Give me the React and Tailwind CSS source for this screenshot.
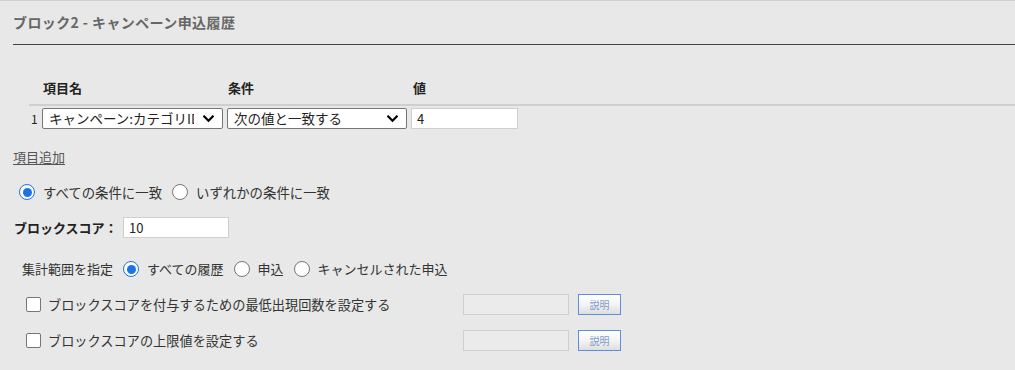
import React from "react";

const font = { fontFamily: '"Noto Sans CJK JP", "Noto Sans", sans-serif' };

function Chevron() {
  return (
    <svg width="11" height="8" viewBox="0 0 11 8" className="shrink-0">
      <path d="M1.3 1.5 L5.5 5.7 L9.7 1.5" fill="none" stroke="#000" strokeWidth="2.2" strokeLinecap="square" />
    </svg>
  );
}

function Select({ text, className }) {
  return (
    <div className={"h-[21px] bg-white border border-[#767676] rounded-[2px] flex items-center pl-[6px] pr-[8px] gap-[9px] " + className}>
      <span className="flex-1 min-w-0 overflow-hidden whitespace-nowrap text-[13.5px] leading-[19px] text-[#222]">{text}</span>
      <Chevron />
    </div>
  );
}

function Radio({ checked }) {
  return checked ? (
    <span className="w-[16px] h-[16px] rounded-full border-[1.5px] border-[#1a73e8] bg-white flex items-center justify-center shrink-0">
      <span className="w-[9px] h-[9px] rounded-full bg-[#1a73e8]" />
    </span>
  ) : (
    <span className="w-[16px] h-[16px] rounded-full border border-[#767676] bg-white shrink-0" />
  );
}

function Check() {
  return <span className="w-[15px] h-[15px] rounded-[2px] border border-[#767676] bg-white shrink-0" />;
}

function OptRow({ label }) {
  return (
    <div className="flex items-center h-[21px]">
      <div className="w-[450px] flex items-center gap-[7px] pl-[13px]">
        <Check />
        <span className="text-[13.2px] text-[#333] whitespace-nowrap">{label}</span>
      </div>
      <div className="w-[106px] h-[21px] border border-[#cfcfcf] bg-[#ebebeb]" />
      <div className="ml-[9px] w-[43px] h-[21px] border border-[#5b8ee0] bg-gradient-to-b from-white via-[#f4f4f4] to-[#dedede] flex items-center justify-center text-[10px] text-[#7f9ad0]">
        説明
      </div>
    </div>
  );
}

export default function App() {
  return (
    <div className="w-[1015px] h-[370px] bg-[#e8e8e8] border-t border-[#cfcfcf] overflow-hidden text-[#333]" style={font}>
      <div className="pl-[13px]">
        <div className="h-[43px] flex items-center text-[14px] font-bold text-[#666] tracking-[0.4px]">
          ブロック2 - キャンペーン申込履歴
        </div>
        <div className="border-b border-[#444]" />
      </div>

      <div className="pl-[29px] mt-[33px]">
        <div className="flex h-[20px] items-center text-[13px] font-bold text-[#222]">
          <div className="w-[13px]" />
          <div className="w-[185px] pl-[1px]">項目名</div>
          <div className="w-[185px] pl-[1px]">条件</div>
          <div className="pl-[1px]">値</div>
        </div>
        <div className="mt-[6px] h-[2px] bg-[#cfcfcf]" />
        <div className="flex items-center h-[24px] pt-[1px]">
          <div className="w-[13px] text-[12px] text-[#222] pl-[2px]">1</div>
          <Select text="キャンペーン:カテゴリID" className="w-[181px]" />
          <div className="w-[4px]" />
          <Select text="次の値と一致する" className="w-[180px]" />
          <div className="w-[4px]" />
          <div className="w-[107px] h-[21px] bg-white border border-[#cfcfcf] flex items-center pl-[5px] text-[13px] text-[#222]">4</div>
        </div>
      </div>

      <div className="pl-[13px] mt-[18px]">
        <div className="text-[13px] leading-[18px] underline text-[#555] underline-offset-[2px]">項目追加</div>

        <div className="mt-[16px] flex items-center h-[20px] pl-[6px] gap-[8px] text-[13.4px] text-[#333]">
          <Radio checked />
          <span className="mr-[2px]">すべての条件に一致</span>
          <Radio />
          <span>いずれかの条件に一致</span>
        </div>

        <div className="mt-[15px] flex items-center h-[21px]">
          <span className="text-[13px] font-bold text-[#222] w-[110px] pl-[1px]">ブロックスコア：</span>
          <div className="w-[106px] h-[21px] bg-white border border-[#cfcfcf] flex items-center pl-[5px] text-[13px] text-[#222]">10</div>
        </div>

        <div className="mt-[21px] flex items-center h-[20px] pl-[9px] gap-[8px] text-[13px] text-[#333]">
          <span className="mr-[2px]">集計範囲を指定</span>
          <Radio checked />
          <span className="mr-[2px]">すべての履歴</span>
          <Radio />
          <span className="mr-[2px]">申込</span>
          <Radio />
          <span>キャンセルされた申込</span>
        </div>

        <div className="mt-[15px]">
          <OptRow label="ブロックスコアを付与するための最低出現回数を設定する" />
        </div>
        <div className="mt-[15px]">
          <OptRow label="ブロックスコアの上限値を設定する" />
        </div>
      </div>
    </div>
  );
}
